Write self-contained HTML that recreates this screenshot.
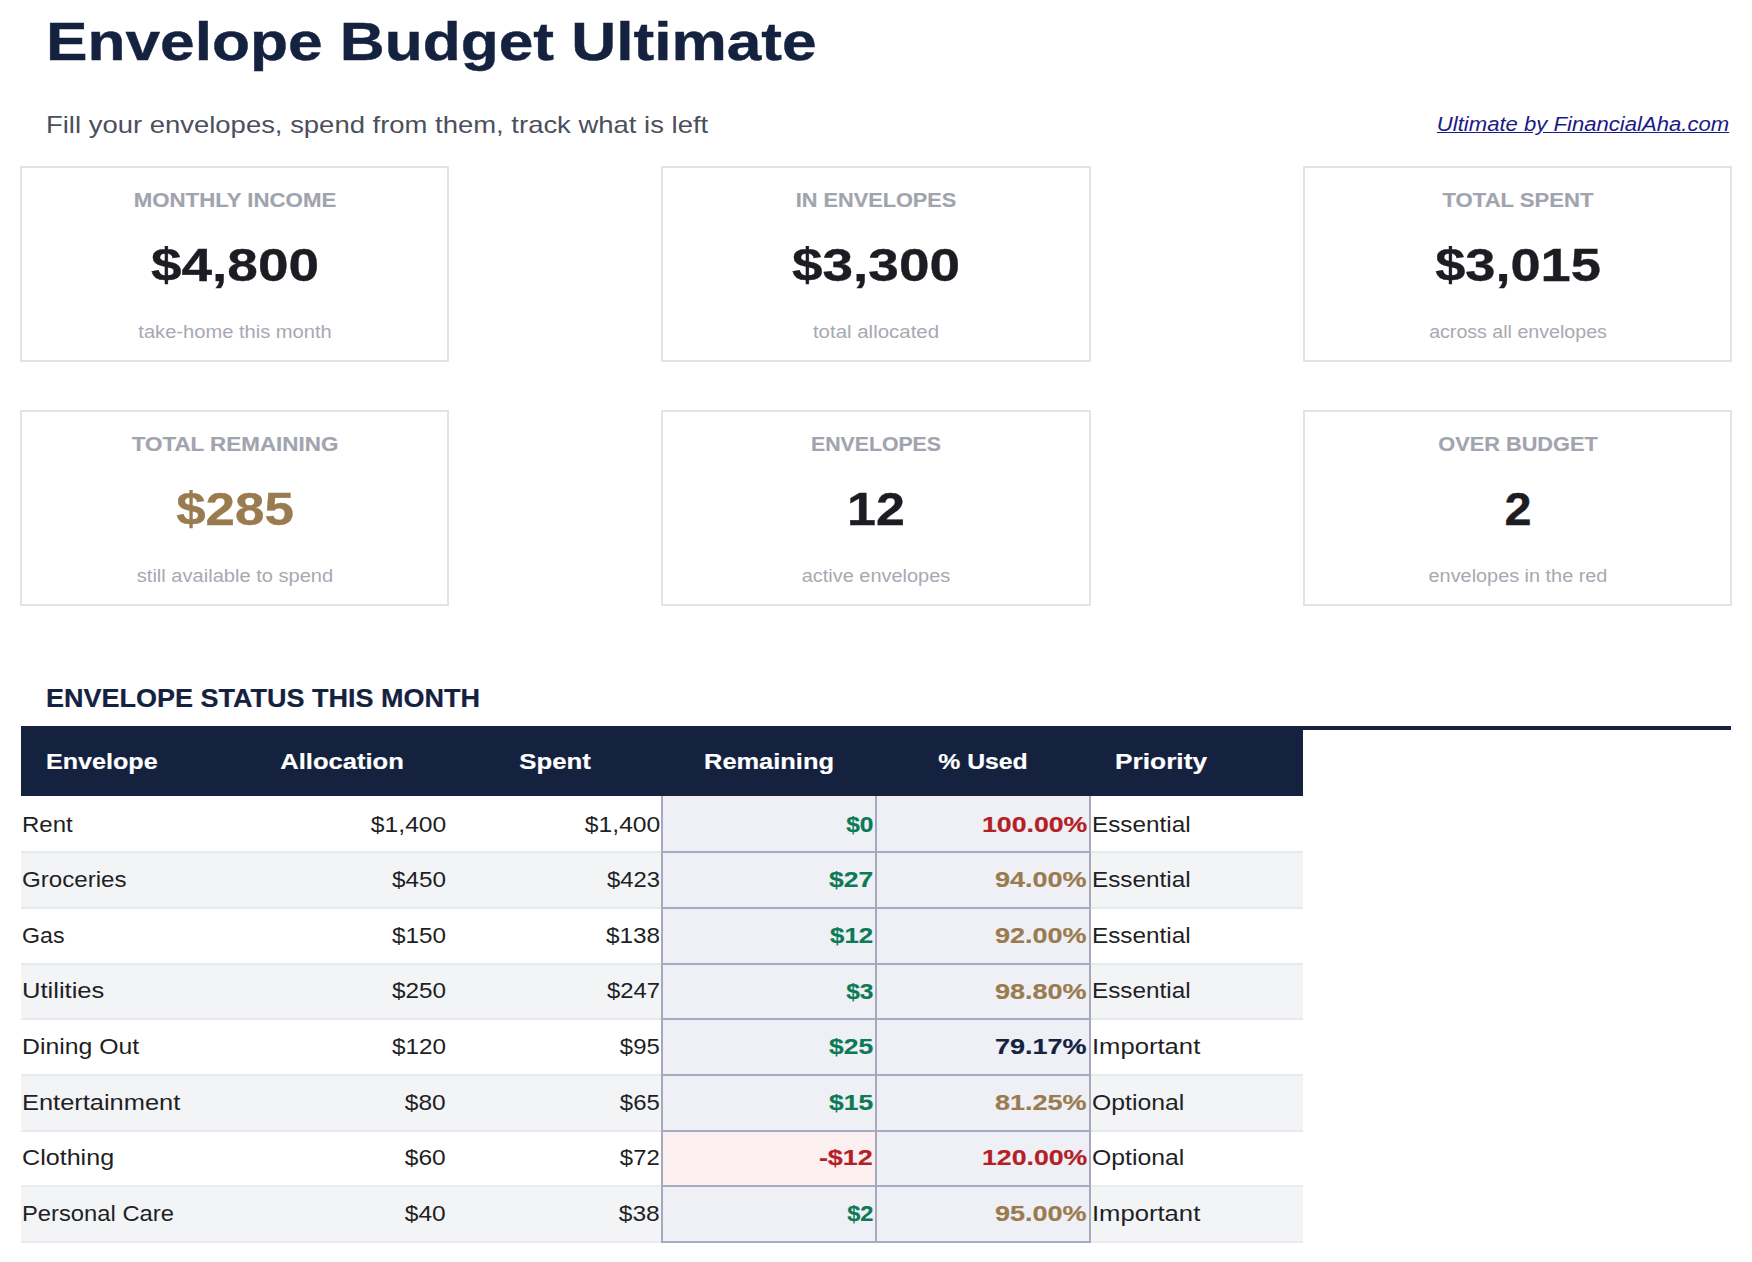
<!DOCTYPE html>
<html><head><meta charset="utf-8"><title>Envelope Budget Ultimate</title>
<style>
html,body{margin:0;padding:0;background:#fff;}
body{width:1752px;height:1262px;position:relative;overflow:hidden;font-family:"Liberation Sans", sans-serif;}
.t{position:absolute;white-space:nowrap;}
.b{position:absolute;}
</style></head><body>
<div class="t" style="left:46px;top:6.25px;font-size:54.08px;line-height:70px;font-weight:bold;color:#15223f;transform:scaleX(1.1501);transform-origin:left;-webkit-text-stroke:0.43px #15223f;">Envelope Budget Ultimate</div>
<div class="t" style="left:46px;top:109.38px;font-size:24.0px;line-height:31px;font-weight:normal;color:#4b505c;transform:scaleX(1.1438);transform-origin:left;">Fill your envelopes, spend from them, track what is left</div>
<div class="t" style="right:22.5px;top:112.21px;font-size:19.6px;line-height:25px;font-weight:normal;color:#1b1a85;transform:scaleX(1.1279);transform-origin:right;font-style:italic;text-decoration:underline;">Ultimate by FinancialAha.com</div>
<div class="b" style="left:20px;top:166px;width:429px;height:196px;background:#fff;border:2px solid #e3e3e5;box-sizing:border-box;"></div>
<div class="t" style="left:234.5px;top:186.29px;font-size:20.8px;line-height:27px;font-weight:bold;color:#a1a4ae;transform:translateX(-50%) scaleX(1.0682);-webkit-text-stroke:0.17px #a1a4ae;">MONTHLY INCOME</div>
<div class="t" style="left:234.5px;top:236.08px;font-size:45.34px;line-height:59px;font-weight:bold;color:#1c1d22;transform:translateX(-50%) scaleX(1.2116);-webkit-text-stroke:0.36px #1c1d22;">$4,800</div>
<div class="t" style="left:234.5px;top:320.83px;font-size:17.5px;line-height:23px;font-weight:normal;color:#a6a9b2;transform:translateX(-50%) scaleX(1.1488);">take-home this month</div>
<div class="b" style="left:661px;top:166px;width:430px;height:196px;background:#fff;border:2px solid #e3e3e5;box-sizing:border-box;"></div>
<div class="t" style="left:876.0px;top:186.29px;font-size:20.8px;line-height:27px;font-weight:bold;color:#a1a4ae;transform:translateX(-50%) scaleX(1.0449);-webkit-text-stroke:0.17px #a1a4ae;">IN ENVELOPES</div>
<div class="t" style="left:876.0px;top:236.08px;font-size:45.34px;line-height:59px;font-weight:bold;color:#1c1d22;transform:translateX(-50%) scaleX(1.2116);-webkit-text-stroke:0.36px #1c1d22;">$3,300</div>
<div class="t" style="left:876.0px;top:320.83px;font-size:17.5px;line-height:23px;font-weight:normal;color:#a6a9b2;transform:translateX(-50%) scaleX(1.1682);">total allocated</div>
<div class="b" style="left:1303px;top:166px;width:429px;height:196px;background:#fff;border:2px solid #e3e3e5;box-sizing:border-box;"></div>
<div class="t" style="left:1517.5px;top:186.29px;font-size:20.8px;line-height:27px;font-weight:bold;color:#a1a4ae;transform:translateX(-50%) scaleX(1.0621);-webkit-text-stroke:0.17px #a1a4ae;">TOTAL SPENT</div>
<div class="t" style="left:1517.5px;top:236.08px;font-size:45.34px;line-height:59px;font-weight:bold;color:#1c1d22;transform:translateX(-50%) scaleX(1.1953);-webkit-text-stroke:0.36px #1c1d22;">$3,015</div>
<div class="t" style="left:1517.5px;top:320.83px;font-size:17.5px;line-height:23px;font-weight:normal;color:#a6a9b2;transform:translateX(-50%) scaleX(1.1210);">across all envelopes</div>
<div class="b" style="left:20px;top:410px;width:429px;height:196px;background:#fff;border:2px solid #e3e3e5;box-sizing:border-box;"></div>
<div class="t" style="left:234.5px;top:430.29px;font-size:20.8px;line-height:27px;font-weight:bold;color:#a1a4ae;transform:translateX(-50%) scaleX(1.0776);-webkit-text-stroke:0.17px #a1a4ae;">TOTAL REMAINING</div>
<div class="t" style="left:234.5px;top:480.08px;font-size:45.34px;line-height:59px;font-weight:bold;color:#9a7b4f;transform:translateX(-50%) scaleX(1.1674);-webkit-text-stroke:0.36px #9a7b4f;">$285</div>
<div class="t" style="left:234.5px;top:564.83px;font-size:17.5px;line-height:23px;font-weight:normal;color:#a6a9b2;transform:translateX(-50%) scaleX(1.1471);">still available to spend</div>
<div class="b" style="left:661px;top:410px;width:430px;height:196px;background:#fff;border:2px solid #e3e3e5;box-sizing:border-box;"></div>
<div class="t" style="left:876.0px;top:430.29px;font-size:20.8px;line-height:27px;font-weight:bold;color:#a1a4ae;transform:translateX(-50%) scaleX(1.0226);-webkit-text-stroke:0.17px #a1a4ae;">ENVELOPES</div>
<div class="t" style="left:876.0px;top:480.08px;font-size:45.34px;line-height:59px;font-weight:bold;color:#1c1d22;transform:translateX(-50%) scaleX(1.1463);-webkit-text-stroke:0.36px #1c1d22;">12</div>
<div class="t" style="left:876.0px;top:564.83px;font-size:17.5px;line-height:23px;font-weight:normal;color:#a6a9b2;transform:translateX(-50%) scaleX(1.1395);">active envelopes</div>
<div class="b" style="left:1303px;top:410px;width:429px;height:196px;background:#fff;border:2px solid #e3e3e5;box-sizing:border-box;"></div>
<div class="t" style="left:1517.5px;top:430.29px;font-size:20.8px;line-height:27px;font-weight:bold;color:#a1a4ae;transform:translateX(-50%) scaleX(1.0449);-webkit-text-stroke:0.17px #a1a4ae;">OVER BUDGET</div>
<div class="t" style="left:1517.5px;top:480.08px;font-size:45.34px;line-height:59px;font-weight:bold;color:#1c1d22;transform:translateX(-50%) scaleX(1.0732);-webkit-text-stroke:0.36px #1c1d22;">2</div>
<div class="t" style="left:1517.5px;top:564.83px;font-size:17.5px;line-height:23px;font-weight:normal;color:#a6a9b2;transform:translateX(-50%) scaleX(1.1346);">envelopes in the red</div>
<div class="t" style="left:46px;top:682.35px;font-size:24.96px;line-height:32px;font-weight:bold;color:#15223f;transform:scaleX(1.0819);transform-origin:left;-webkit-text-stroke:0.20px #15223f;">ENVELOPE STATUS THIS MONTH</div>
<div class="b" style="left:21px;top:726px;width:1710px;height:4px;background:#15223f;"></div>
<div class="b" style="left:21px;top:726px;width:1282px;height:70px;background:#15223f;"></div>
<div class="t" style="left:46px;top:745.77px;font-size:22.88px;line-height:30px;font-weight:bold;color:#ffffff;transform:scaleX(1.0980);transform-origin:left;-webkit-text-stroke:0.18px #ffffff;">Envelope</div>
<div class="t" style="left:341.5px;top:745.77px;font-size:22.88px;line-height:30px;font-weight:bold;color:#ffffff;transform:translateX(-50%) scaleX(1.1174);-webkit-text-stroke:0.18px #ffffff;">Allocation</div>
<div class="t" style="left:555.0px;top:745.77px;font-size:22.88px;line-height:30px;font-weight:bold;color:#ffffff;transform:translateX(-50%) scaleX(1.1257);-webkit-text-stroke:0.18px #ffffff;">Spent</div>
<div class="t" style="left:769.0px;top:745.77px;font-size:22.88px;line-height:30px;font-weight:bold;color:#ffffff;transform:translateX(-50%) scaleX(1.1113);-webkit-text-stroke:0.18px #ffffff;">Remaining</div>
<div class="t" style="left:983.0px;top:745.77px;font-size:22.88px;line-height:30px;font-weight:bold;color:#ffffff;transform:translateX(-50%) scaleX(1.0829);-webkit-text-stroke:0.18px #ffffff;">% Used</div>
<div class="t" style="left:1115px;top:745.77px;font-size:22.88px;line-height:30px;font-weight:bold;color:#ffffff;transform:scaleX(1.1492);transform-origin:left;-webkit-text-stroke:0.18px #ffffff;">Priority</div>
<div class="b" style="left:21px;top:796px;width:1282px;height:55px;background:#ffffff;"></div>
<div class="b" style="left:662px;top:796px;width:214px;height:55px;background:#eef0f5;"></div>
<div class="b" style="left:876px;top:796px;width:214px;height:55px;background:#eef0f5;"></div>
<div class="b" style="left:21px;top:851px;width:1282px;height:56px;background:#f3f4f6;"></div>
<div class="b" style="left:662px;top:851px;width:214px;height:56px;background:#eef0f5;"></div>
<div class="b" style="left:876px;top:851px;width:214px;height:56px;background:#eef0f5;"></div>
<div class="b" style="left:21px;top:907px;width:1282px;height:56px;background:#ffffff;"></div>
<div class="b" style="left:662px;top:907px;width:214px;height:56px;background:#eef0f5;"></div>
<div class="b" style="left:876px;top:907px;width:214px;height:56px;background:#eef0f5;"></div>
<div class="b" style="left:21px;top:963px;width:1282px;height:55px;background:#f3f4f6;"></div>
<div class="b" style="left:662px;top:963px;width:214px;height:55px;background:#eef0f5;"></div>
<div class="b" style="left:876px;top:963px;width:214px;height:55px;background:#eef0f5;"></div>
<div class="b" style="left:21px;top:1018px;width:1282px;height:56px;background:#ffffff;"></div>
<div class="b" style="left:662px;top:1018px;width:214px;height:56px;background:#eef0f5;"></div>
<div class="b" style="left:876px;top:1018px;width:214px;height:56px;background:#eef0f5;"></div>
<div class="b" style="left:21px;top:1074px;width:1282px;height:56px;background:#f3f4f6;"></div>
<div class="b" style="left:662px;top:1074px;width:214px;height:56px;background:#eef0f5;"></div>
<div class="b" style="left:876px;top:1074px;width:214px;height:56px;background:#eef0f5;"></div>
<div class="b" style="left:21px;top:1130px;width:1282px;height:55px;background:#ffffff;"></div>
<div class="b" style="left:662px;top:1130px;width:214px;height:55px;background:#fcefef;"></div>
<div class="b" style="left:876px;top:1130px;width:214px;height:55px;background:#eef0f5;"></div>
<div class="b" style="left:21px;top:1185px;width:1282px;height:56px;background:#f3f4f6;"></div>
<div class="b" style="left:662px;top:1185px;width:214px;height:56px;background:#eef0f5;"></div>
<div class="b" style="left:876px;top:1185px;width:214px;height:56px;background:#eef0f5;"></div>
<div class="b" style="left:21px;top:851px;width:640px;height:2px;background:#e9eaed;"></div>
<div class="b" style="left:1091px;top:851px;width:212px;height:2px;background:#e9eaed;"></div>
<div class="b" style="left:661px;top:851px;width:430px;height:2px;background:#a9a9c1;"></div>
<div class="b" style="left:21px;top:907px;width:640px;height:2px;background:#e9eaed;"></div>
<div class="b" style="left:1091px;top:907px;width:212px;height:2px;background:#e9eaed;"></div>
<div class="b" style="left:661px;top:907px;width:430px;height:2px;background:#a9a9c1;"></div>
<div class="b" style="left:21px;top:963px;width:640px;height:2px;background:#e9eaed;"></div>
<div class="b" style="left:1091px;top:963px;width:212px;height:2px;background:#e9eaed;"></div>
<div class="b" style="left:661px;top:963px;width:430px;height:2px;background:#a9a9c1;"></div>
<div class="b" style="left:21px;top:1018px;width:640px;height:2px;background:#e9eaed;"></div>
<div class="b" style="left:1091px;top:1018px;width:212px;height:2px;background:#e9eaed;"></div>
<div class="b" style="left:661px;top:1018px;width:430px;height:2px;background:#a9a9c1;"></div>
<div class="b" style="left:21px;top:1074px;width:640px;height:2px;background:#e9eaed;"></div>
<div class="b" style="left:1091px;top:1074px;width:212px;height:2px;background:#e9eaed;"></div>
<div class="b" style="left:661px;top:1074px;width:430px;height:2px;background:#a9a9c1;"></div>
<div class="b" style="left:21px;top:1130px;width:640px;height:2px;background:#e9eaed;"></div>
<div class="b" style="left:1091px;top:1130px;width:212px;height:2px;background:#e9eaed;"></div>
<div class="b" style="left:661px;top:1130px;width:430px;height:2px;background:#a9a9c1;"></div>
<div class="b" style="left:21px;top:1185px;width:640px;height:2px;background:#e9eaed;"></div>
<div class="b" style="left:1091px;top:1185px;width:212px;height:2px;background:#e9eaed;"></div>
<div class="b" style="left:661px;top:1185px;width:430px;height:2px;background:#a9a9c1;"></div>
<div class="b" style="left:21px;top:1241px;width:640px;height:2px;background:#e9eaed;"></div>
<div class="b" style="left:1091px;top:1241px;width:212px;height:2px;background:#e9eaed;"></div>
<div class="b" style="left:661px;top:1241px;width:430px;height:2px;background:#a9a9c1;"></div>
<div class="b" style="left:661px;top:796px;width:2px;height:447px;background:#a7a8bc;"></div>
<div class="b" style="left:875px;top:796px;width:2px;height:447px;background:#a7a8bc;"></div>
<div class="b" style="left:1089px;top:796px;width:2px;height:447px;background:#a7a8bc;"></div>
<div class="t" style="left:22px;top:809.67px;font-size:22.0px;line-height:29px;font-weight:normal;color:#1f1f26;transform:scaleX(1.0909);transform-origin:left;">Rent</div>
<div class="t" style="right:1306px;top:809.67px;font-size:22.0px;line-height:29px;font-weight:normal;color:#1f1f26;transform:scaleX(1.1212);transform-origin:right;">$1,400</div>
<div class="t" style="right:1092px;top:809.67px;font-size:22.0px;line-height:29px;font-weight:normal;color:#1f1f26;transform:scaleX(1.1212);transform-origin:right;">$1,400</div>
<div class="t" style="left:1092px;top:809.67px;font-size:22.0px;line-height:29px;font-weight:normal;color:#1f1f26;transform:scaleX(1.1047);transform-origin:left;">Essential</div>
<div class="t" style="right:879px;top:808.87px;font-size:22.88px;line-height:30px;font-weight:bold;color:#0b7a55;transform:scaleX(1.0722);transform-origin:right;-webkit-text-stroke:0.18px #0b7a55;">$0</div>
<div class="t" style="right:665px;top:808.87px;font-size:22.88px;line-height:30px;font-weight:bold;color:#b42025;transform:scaleX(1.1661);transform-origin:right;-webkit-text-stroke:0.18px #b42025;">100.00%</div>
<div class="t" style="left:22px;top:865.27px;font-size:22.0px;line-height:29px;font-weight:normal;color:#1f1f26;transform:scaleX(1.0968);transform-origin:left;">Groceries</div>
<div class="t" style="right:1306px;top:865.27px;font-size:22.0px;line-height:29px;font-weight:normal;color:#1f1f26;transform:scaleX(1.1042);transform-origin:right;">$450</div>
<div class="t" style="right:1092px;top:865.27px;font-size:22.0px;line-height:29px;font-weight:normal;color:#1f1f26;transform:scaleX(1.0833);transform-origin:right;">$423</div>
<div class="t" style="left:1092px;top:865.27px;font-size:22.0px;line-height:29px;font-weight:normal;color:#1f1f26;transform:scaleX(1.1047);transform-origin:left;">Essential</div>
<div class="t" style="right:879px;top:864.47px;font-size:22.88px;line-height:30px;font-weight:bold;color:#0b7a55;transform:scaleX(1.1564);transform-origin:right;-webkit-text-stroke:0.18px #0b7a55;">$27</div>
<div class="t" style="right:665px;top:864.47px;font-size:22.88px;line-height:30px;font-weight:bold;color:#9a7b4f;transform:scaleX(1.1814);transform-origin:right;-webkit-text-stroke:0.18px #9a7b4f;">94.00%</div>
<div class="t" style="left:22px;top:920.87px;font-size:22.0px;line-height:29px;font-weight:normal;color:#1f1f26;transform:scaleX(1.0526);transform-origin:left;">Gas</div>
<div class="t" style="right:1306px;top:920.87px;font-size:22.0px;line-height:29px;font-weight:normal;color:#1f1f26;transform:scaleX(1.1042);transform-origin:right;">$150</div>
<div class="t" style="right:1092px;top:920.87px;font-size:22.0px;line-height:29px;font-weight:normal;color:#1f1f26;transform:scaleX(1.1042);transform-origin:right;">$138</div>
<div class="t" style="left:1092px;top:920.87px;font-size:22.0px;line-height:29px;font-weight:normal;color:#1f1f26;transform:scaleX(1.1047);transform-origin:left;">Essential</div>
<div class="t" style="right:879px;top:920.07px;font-size:22.88px;line-height:30px;font-weight:bold;color:#0b7a55;transform:scaleX(1.1295);transform-origin:right;-webkit-text-stroke:0.18px #0b7a55;">$12</div>
<div class="t" style="right:665px;top:920.07px;font-size:22.88px;line-height:30px;font-weight:bold;color:#9a7b4f;transform:scaleX(1.1814);transform-origin:right;-webkit-text-stroke:0.18px #9a7b4f;">92.00%</div>
<div class="t" style="left:22px;top:976.47px;font-size:22.0px;line-height:29px;font-weight:normal;color:#1f1f26;transform:scaleX(1.1618);transform-origin:left;">Utilities</div>
<div class="t" style="right:1306px;top:976.47px;font-size:22.0px;line-height:29px;font-weight:normal;color:#1f1f26;transform:scaleX(1.1042);transform-origin:right;">$250</div>
<div class="t" style="right:1092px;top:976.47px;font-size:22.0px;line-height:29px;font-weight:normal;color:#1f1f26;transform:scaleX(1.0833);transform-origin:right;">$247</div>
<div class="t" style="left:1092px;top:976.47px;font-size:22.0px;line-height:29px;font-weight:normal;color:#1f1f26;transform:scaleX(1.1047);transform-origin:left;">Essential</div>
<div class="t" style="right:879px;top:975.67px;font-size:22.88px;line-height:30px;font-weight:bold;color:#0b7a55;transform:scaleX(1.0722);transform-origin:right;-webkit-text-stroke:0.18px #0b7a55;">$3</div>
<div class="t" style="right:665px;top:975.67px;font-size:22.88px;line-height:30px;font-weight:bold;color:#9a7b4f;transform:scaleX(1.1814);transform-origin:right;-webkit-text-stroke:0.18px #9a7b4f;">98.80%</div>
<div class="t" style="left:22px;top:1032.07px;font-size:22.0px;line-height:29px;font-weight:normal;color:#1f1f26;transform:scaleX(1.1275);transform-origin:left;">Dining Out</div>
<div class="t" style="right:1306px;top:1032.07px;font-size:22.0px;line-height:29px;font-weight:normal;color:#1f1f26;transform:scaleX(1.1042);transform-origin:right;">$120</div>
<div class="t" style="right:1092px;top:1032.07px;font-size:22.0px;line-height:29px;font-weight:normal;color:#1f1f26;transform:scaleX(1.0857);transform-origin:right;">$95</div>
<div class="t" style="left:1092px;top:1032.07px;font-size:22.0px;line-height:29px;font-weight:normal;color:#1f1f26;transform:scaleX(1.1648);transform-origin:left;">Important</div>
<div class="t" style="right:879px;top:1031.27px;font-size:22.88px;line-height:30px;font-weight:bold;color:#0b7a55;transform:scaleX(1.1564);transform-origin:right;-webkit-text-stroke:0.18px #0b7a55;">$25</div>
<div class="t" style="right:665px;top:1031.27px;font-size:22.88px;line-height:30px;font-weight:bold;color:#15223f;transform:scaleX(1.1814);transform-origin:right;-webkit-text-stroke:0.18px #15223f;">79.17%</div>
<div class="t" style="left:22px;top:1087.67px;font-size:22.0px;line-height:29px;font-weight:normal;color:#1f1f26;transform:scaleX(1.1556);transform-origin:left;">Entertainment</div>
<div class="t" style="right:1306px;top:1087.67px;font-size:22.0px;line-height:29px;font-weight:normal;color:#1f1f26;transform:scaleX(1.1143);transform-origin:right;">$80</div>
<div class="t" style="right:1092px;top:1087.67px;font-size:22.0px;line-height:29px;font-weight:normal;color:#1f1f26;transform:scaleX(1.0857);transform-origin:right;">$65</div>
<div class="t" style="left:1092px;top:1087.67px;font-size:22.0px;line-height:29px;font-weight:normal;color:#1f1f26;transform:scaleX(1.1250);transform-origin:left;">Optional</div>
<div class="t" style="right:879px;top:1086.87px;font-size:22.88px;line-height:30px;font-weight:bold;color:#0b7a55;transform:scaleX(1.1564);transform-origin:right;-webkit-text-stroke:0.18px #0b7a55;">$15</div>
<div class="t" style="right:665px;top:1086.87px;font-size:22.88px;line-height:30px;font-weight:bold;color:#9a7b4f;transform:scaleX(1.1814);transform-origin:right;-webkit-text-stroke:0.18px #9a7b4f;">81.25%</div>
<div class="t" style="left:22px;top:1143.27px;font-size:22.0px;line-height:29px;font-weight:normal;color:#1f1f26;transform:scaleX(1.1410);transform-origin:left;">Clothing</div>
<div class="t" style="right:1306px;top:1143.27px;font-size:22.0px;line-height:29px;font-weight:normal;color:#1f1f26;transform:scaleX(1.1143);transform-origin:right;">$60</div>
<div class="t" style="right:1092px;top:1143.27px;font-size:22.0px;line-height:29px;font-weight:normal;color:#1f1f26;transform:scaleX(1.0857);transform-origin:right;">$72</div>
<div class="t" style="left:1092px;top:1143.27px;font-size:22.0px;line-height:29px;font-weight:normal;color:#1f1f26;transform:scaleX(1.1250);transform-origin:left;">Optional</div>
<div class="t" style="right:879px;top:1142.47px;font-size:22.88px;line-height:30px;font-weight:bold;color:#b42025;transform:scaleX(1.1769);transform-origin:right;-webkit-text-stroke:0.18px #b42025;">-$12</div>
<div class="t" style="right:665px;top:1142.47px;font-size:22.88px;line-height:30px;font-weight:bold;color:#b42025;transform:scaleX(1.1661);transform-origin:right;-webkit-text-stroke:0.18px #b42025;">120.00%</div>
<div class="t" style="left:22px;top:1198.87px;font-size:22.0px;line-height:29px;font-weight:normal;color:#1f1f26;transform:scaleX(1.0803);transform-origin:left;">Personal Care</div>
<div class="t" style="right:1306px;top:1198.87px;font-size:22.0px;line-height:29px;font-weight:normal;color:#1f1f26;transform:scaleX(1.1143);transform-origin:right;">$40</div>
<div class="t" style="right:1092px;top:1198.87px;font-size:22.0px;line-height:29px;font-weight:normal;color:#1f1f26;transform:scaleX(1.1143);transform-origin:right;">$38</div>
<div class="t" style="left:1092px;top:1198.87px;font-size:22.0px;line-height:29px;font-weight:normal;color:#1f1f26;transform:scaleX(1.1648);transform-origin:left;">Important</div>
<div class="t" style="right:879px;top:1198.07px;font-size:22.88px;line-height:30px;font-weight:bold;color:#0b7a55;transform:scaleX(1.0324);transform-origin:right;-webkit-text-stroke:0.18px #0b7a55;">$2</div>
<div class="t" style="right:665px;top:1198.07px;font-size:22.88px;line-height:30px;font-weight:bold;color:#9a7b4f;transform:scaleX(1.1814);transform-origin:right;-webkit-text-stroke:0.18px #9a7b4f;">95.00%</div>
</body></html>
